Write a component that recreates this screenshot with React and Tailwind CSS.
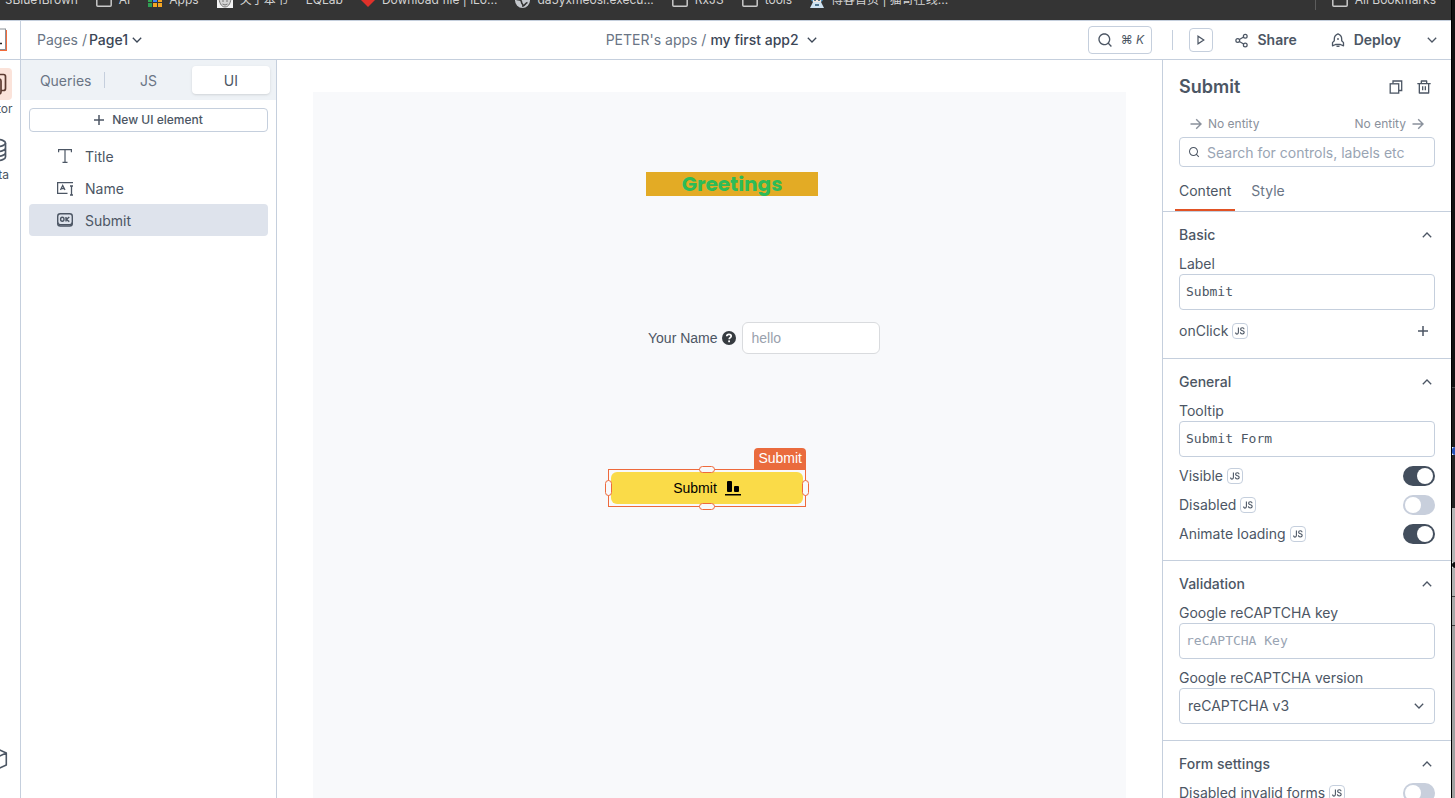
import React, { useState } from "react";
import { Share2 } from "lucide-react";
import { RiDeleteBinLine, RiSearchLine } from "react-icons/ri";

function Chevron({ up = false }) {
  return (
    <svg width="10" height="6" viewBox="0 0 10 6" fill="none" stroke="currentColor" strokeWidth="1.3" className="shrink-0" aria-hidden="true">
      <path d={up ? "M.8 5.2 5 1l4.2 4.2" : "M.8.8 5 5 9.2.8"} />
    </svg>
  );
}

function Plus({ size = 10 }) {
  return (
    <svg width={size} height={size} viewBox="0 0 10 10" stroke="currentColor" strokeWidth="1.5" aria-hidden="true">
      <path d="M5 0v10M0 5h10" />
    </svg>
  );
}

function Arrow() {
  return (
    <svg width="12" height="12" viewBox="0 0 12 12" fill="none" stroke="currentColor" strokeWidth="1.4" aria-hidden="true">
      <path d="M.5 6h10.500M6.200 1.200 11 6l-4.800 4.800" />
    </svg>
  );
}

function FolderIcon() {
  return (
    <svg width="16" height="16" viewBox="0 0 16 16" fill="none" stroke="#c9c9c9" strokeWidth="1.5" className="shrink-0" aria-hidden="true">
      <path d="M.8 3a1 1 0 0 1 1-1h4l1.600 2h6.800a1 1 0 0 1 1 1v8.200a1 1 0 0 1-1 1H1.800a1 1 0 0 1-1-1z" />
    </svg>
  );
}

function AppsIcon() {
  const colors = ["#ea4335", "#ea4335", "#ea4335", "#34a853", "#4285f4", "#f5a623", "#2f9e53", "#f5a623", "#f5a623"];
  return (
    <svg width="14" height="14" viewBox="0 0 14 14" className="shrink-0" aria-hidden="true">
      {colors.map((c, i) => (
        <rect key={i} x={(i % 3) * 5} y={Math.floor(i / 3) * 5} width="4" height="4" fill={c} />
      ))}
    </svg>
  );
}

function FaceIcon() {
  return (
    <svg width="16" height="16" viewBox="0 0 16 16" className="shrink-0" aria-hidden="true">
      <rect width="16" height="16" fill="#f2f2f2" />
      <path d="M2 5c0 5 2 10 6 10s6-5 6-10" fill="#d4d4d4" stroke="#777" />
      <path d="M5 9h2M9 9h2M5.500 12q2.500 2 5 0" stroke="#777" fill="none" />
    </svg>
  );
}

function DiamondIcon() {
  return (
    <svg width="14" height="14" viewBox="0 0 14 14" className="shrink-0" aria-hidden="true">
      <path d="M7 0l7 7-7 7-7-7z" fill="#e0312a" />
    </svg>
  );
}

function GlobeIcon() {
  return (
    <svg width="15" height="15" viewBox="0 0 15 15" className="shrink-0" aria-hidden="true">
      <circle cx="7.500" cy="7.500" r="7.500" fill="#c4c7cc" />
      <path d="M1.500 6.500c3 0 5 .5 5 2.500s1.500 1.500 1.500 4c2.500-1 2-3 4.500-3.500" fill="none" stroke="#343434" strokeWidth="1.600" />
    </svg>
  );
}

function RobotIcon() {
  return (
    <svg width="14" height="16" viewBox="0 0 14 16" className="shrink-0" aria-hidden="true">
      <rect x="1" width="12" height="10" rx="3" fill="#5aa0cf" />
      <rect x="3" y="5" width="8" height="5" fill="#f3e6dc" />
      <path d="M0 16l3-6h8l3 6z" fill="#cfe3f2" />
      <path d="M4 8h2M8 8h2M5 13h4" stroke="#24506e" strokeWidth="1.300" />
    </svg>
  );
}

const bookmarks = [
  { text: "3Blue1Brown" },
  { text: "AI", icon: <FolderIcon /> },
  { text: "Apps", icon: <AppsIcon /> },
  { text: "关于本书", icon: <FaceIcon /> },
  { text: "EQLab" },
  { text: "Download file | iLo...", icon: <DiamondIcon /> },
  { text: "da5yxmeosi.execu...", icon: <GlobeIcon /> },
  { text: "RxJS", icon: <FolderIcon /> },
  { text: "tools", icon: <FolderIcon /> },
  { text: "博客首页 | 猫哥在线...", icon: <RobotIcon /> },
];

function BookmarkLink({ text, icon }) {
  return (
    <a href="#bookmark" className="flex shrink-0 items-center gap-[7px] whitespace-nowrap">
      {icon}
      {text}
    </a>
  );
}

function BookmarkBar() {
  return (
    <nav aria-label="Bookmarks" className="h-5 shrink-0 overflow-hidden bg-[#343434] text-xs text-[#d2d2d2]">
      <div className="-mt-2.5 flex h-5 items-center gap-[18px] pl-[5px] pr-[15px]">
        {bookmarks.map((b) => (
          <BookmarkLink key={b.text} {...b} />
        ))}
        <div className="ml-auto flex items-center gap-4">
          <span className="h-5 w-px bg-[#5c5c5c]" />
          <BookmarkLink text="All Bookmarks" icon={<FolderIcon />} />
        </div>
      </div>
    </nav>
  );
}

function Logo() {
  return (
    <svg width="24" height="24" viewBox="0 0 24 24" aria-hidden="true">
      <rect x="2" y="2" width="21" height="21" fill="#f26b3a" />
      <rect x="1" y="1" width="20.500" height="20.500" fill="#fff" stroke="#8a8f96" />
      <path d="M4 15l3-7 3 7M5 13h4M13 15.500h5" stroke="#222" strokeWidth="1.500" fill="none" />
    </svg>
  );
}

function DeployIcon() {
  return (
    <svg width="14" height="14" viewBox="0 0 14 14" fill="none" stroke="currentColor" strokeWidth="1.300" strokeLinejoin="round" aria-hidden="true">
      <path d="M7 .9C4.700 1.900 3.300 3.800 3.300 6v1.700L1.500 9.600v3.200l3-1.300h5l3 1.300V9.600l-1.800-1.900V6C10.700 3.800 9.300 1.900 7 .9z" />
      <path d="M5.500 13.300h3" />
      <circle cx="7" cy="6" r=".9" fill="currentColor" stroke="none" />
    </svg>
  );
}

function Header() {
  return (
    <header className="flex h-10 shrink-0 border-y border-[#c5cfdd] bg-white text-[#4c5664]">
      <div className="flex w-[21px] shrink-0 justify-end overflow-hidden border-r border-[#c5cfdd]">
        <a href="#home" aria-label="Home" className="flex w-12 shrink-0 items-center justify-center">
          <Logo />
        </a>
      </div>
      <div className="grid flex-1 grid-cols-[11fr_auto_12fr] items-center pl-4 pr-[14px] text-sm">
        <div className="flex items-center gap-0.5">
          <span className="text-[#6a7585]">Pages /</span>
          <button className="flex items-center gap-1 font-medium text-[#3b4656]">
            Page1 <Chevron />
          </button>
        </div>
        <div className="flex items-center gap-1">
          <span className="text-[#6a7585]">PETER's apps /</span>
          <button className="flex items-center gap-2 font-medium text-[#3b4656]">
            my first app2 <Chevron />
          </button>
        </div>
        <div className="flex items-center justify-end">
          <button aria-label="Search" className="flex h-7 w-16 items-center justify-center gap-2 rounded border border-[#c5cfdd] text-xs">
            <RiSearchLine size={16} />
            <span>
              ⌘ <i>K</i>
            </span>
          </button>
          <span className="ml-5 h-5 w-px bg-[#c5cfdd]" />
          <button aria-label="Preview" className="ml-4 flex size-6 items-center justify-center rounded border border-[#c5cfdd]">
            <svg width="8" height="10" viewBox="0 0 8 10" fill="none" stroke="currentColor" strokeWidth="1.200" aria-hidden="true">
              <path d="M1 1.200v7.600L6.800 5z" />
            </svg>
          </button>
          <button className="ml-[21px] flex items-center gap-2 font-semibold">
            <Share2 size={15} strokeWidth={2} />
            Share
          </button>
          <button className="ml-[34px] flex items-center gap-[9px] font-semibold">
            <DeployIcon />
            Deploy
          </button>
          <button aria-label="Deploy options" className="ml-[26px]">
            <Chevron />
          </button>
        </div>
      </div>
    </header>
  );
}

function Rail() {
  return (
    <nav aria-label="Workspace" className="flex w-[21px] shrink-0 justify-end overflow-hidden border-r border-[#c5cfdd] text-xs text-[#4c5664]">
      <div className="flex w-12 shrink-0 flex-col items-center pb-[27px] pt-2">
        <a href="#editor" className="flex flex-col items-center gap-px">
          <span className="flex size-8 items-center justify-center rounded bg-[#fbe3da] text-[#5c3a30]">
            <svg width="24" height="24" viewBox="0 0 24 24" fill="none" stroke="currentColor" strokeWidth="1.700" aria-hidden="true">
              <rect x="3" y="7" width="14" height="15" rx="2" />
              <path d="M7.500 7V4.500a2 2 0 0 1 2-2h10a2 2 0 0 1 2 2v12a2 2 0 0 1-2 2H17" />
            </svg>
          </span>
          <span>Editor</span>
        </a>
        <a href="#data" className="mt-[17px] flex flex-col items-center gap-px">
          <span className="flex size-8 items-center justify-center">
            <svg width="24" height="24" viewBox="0 0 24 24" fill="none" stroke="currentColor" strokeWidth="1.700" aria-hidden="true">
              <ellipse cx="12" cy="5" rx="9.500" ry="3.700" />
              <path d="M2.500 5v14c0 2 4.300 3.700 9.500 3.700s9.500-1.700 9.500-3.700V5M2.500 10c0 2 4.300 3.700 9.500 3.700s9.500-1.700 9.500-3.700M2.500 14.800c0 2 4.300 3.700 9.500 3.700s9.500-1.700 9.500-3.700" />
            </svg>
          </span>
          <span>Data</span>
        </a>
        <a href="#libraries" aria-label="Libraries" className="mt-auto">
          <svg width="24" height="24" viewBox="0 0 24 24" fill="none" stroke="currentColor" strokeWidth="1.600" strokeLinejoin="round" aria-hidden="true">
            <path d="M12 1.500 22.300 6v12L12 22.500 1.700 18V6zM1.700 6 12 10.500 22.300 6M12 10.500v12" />
          </svg>
        </a>
      </div>
    </nav>
  );
}

function TextIcon() {
  return (
    <svg width="16" height="16" viewBox="0 0 16 16" fill="none" stroke="currentColor" strokeWidth="1.200" aria-hidden="true">
      <path d="M1.600 4.200V1.600h12.800v2.600M8 1.600v12.800M5.500 14.400h5" />
    </svg>
  );
}

function InputIcon() {
  return (
    <svg width="16" height="16" viewBox="0 0 16 16" fill="none" stroke="currentColor" strokeWidth="1.300" aria-hidden="true">
      <path d="M16 2.600H.6v10.800H10.500" />
      <path d="M3.500 10 5.700 5.500 8 10M4.300 8.700h2.900" />
      <path d="M14.500 6v9M13 6h3M13 15h3" />
    </svg>
  );
}

function ButtonIcon() {
  return (
    <svg width="16" height="16" viewBox="0 0 16 16" fill="none" stroke="currentColor" strokeWidth="1.400" aria-hidden="true">
      <rect x=".7" y="1.800" width="14.600" height="10.800" rx="2.600" />
      <path d="M.7 10.500v1c0 1.600 1.200 2.500 2.600 2.500h9.400c1.400 0 2.600-.9 2.600-2.500v-1" />
      <ellipse cx="5.300" cy="7.300" rx="1.700" ry="2" />
      <path d="M9 5v4.600M12.300 5 9.400 7.500l2.900 2.100" />
    </svg>
  );
}

const widgets = [
  { name: "Title", icon: <TextIcon /> },
  { name: "Name", icon: <InputIcon /> },
  { name: "Submit", icon: <ButtonIcon /> },
];

function Explorer() {
  return (
    <aside className="w-64 shrink-0 border-r border-[#c5cfdd] text-sm text-[#4c5664]">
      <div role="tablist" className="grid h-10 grid-cols-3 items-center gap-1 bg-[#eef2f6] px-1.5 text-[#6a7585]">
        <button role="tab" aria-selected="false" className="flex h-7 items-center justify-center">
          <span className="flex-1 pt-0.5">Queries</span>
          <span className="h-4 w-px bg-[#c5cfdd]" />
        </button>
        <button role="tab" aria-selected="false" className="h-7 pt-0.5">JS</button>
        <button role="tab" aria-selected="true" className="h-7 rounded bg-white pt-0.5 text-[#4c5664] shadow-sm">UI</button>
      </div>
      <div className="p-2">
        <button className="flex h-6 w-full items-center justify-center gap-2 rounded border border-[#c5cfdd] text-xs font-medium">
          <Plus />
          New UI element
        </button>
        <ul className="mt-2">
          {widgets.map((w) => (
            <li key={w.name}>
              <button
                className={
                  w.name === "Submit"
                    ? "flex h-8 w-full items-center gap-3 rounded bg-[#dee3ec] pl-7"
                    : "flex h-8 w-full items-center gap-3 rounded pl-7"
                }
              >
                {w.icon}
                <span className="pt-0.5">{w.name}</span>
              </button>
            </li>
          ))}
        </ul>
      </div>
    </aside>
  );
}

function Canvas() {
  return (
    <main className="min-w-0 flex-1 px-9 pt-8">
      <div className="relative h-full bg-[#f8f9fb] font-['Liberation_Sans',Arial,sans-serif] text-sm">
        <h1 className="absolute left-[333px] top-20 h-6 w-[172px] bg-[#e3ab25] text-center font-[Poppins,Inter,sans-serif] text-xl leading-6 font-bold text-[#2dbb58]">
          Greetings
        </h1>

        <div className="absolute left-[335px] top-[230px] flex items-center">
          <label htmlFor="your-name" className="text-[#4c5664]">Your Name</label>
          <svg width="14" height="14" viewBox="0 0 14 14" className="ml-1 mr-1.5" aria-hidden="true">
            <circle cx="7" cy="7" r="7" fill="#363b40" />
            <path d="M4.800 5.300c0-1.300 1-2 2.200-2s2.200.7 2.200 1.900c0 1.500-2 1.500-2 3.100" fill="none" stroke="#fff" strokeWidth="1.700" />
            <rect x="6.200" y="9.400" width="1.800" height="1.800" fill="#fff" />
          </svg>
          <input
            id="your-name"
            placeholder="hello"
            className="h-8 w-[138px] rounded-md border border-[#d9dbde] bg-white px-[9px] text-[#4c5664] outline-none placeholder:text-[#99a1ad]"
          />
        </div>

        <div className="absolute left-[295px] top-[377px] h-[38px] w-[198px] border border-[#ee6a3c] p-0.5">
          <button className="flex h-full w-full items-center justify-center gap-2 rounded-md bg-[#fadb48] text-black">
            Submit
            <svg width="16" height="16" viewBox="0 0 16 16" aria-hidden="true">
              <rect x="2" y="1" width="5" height="11" rx="1" />
              <rect x="9" y="6" width="5" height="6" rx="1" />
              <rect x="0" y="14" width="16" height="1.500" />
            </svg>
          </button>
          <span className="absolute -right-px bottom-full flex h-[22px] items-center rounded-t-sm bg-[#ea6b3d] px-1 pb-0.5 text-white">Submit</span>
          <span className="absolute left-1/2 -top-1 h-[7px] w-4 -translate-x-1/2 rounded-full border border-[#ee6a3c] bg-[#f8f9fb]" />
          <span className="absolute left-1/2 -bottom-1 h-[7px] w-4 -translate-x-1/2 rounded-full border border-[#ee6a3c] bg-[#f8f9fb]" />
          <span className="absolute top-1/2 -left-1 h-4 w-[7px] -translate-y-1/2 rounded-full border border-[#ee6a3c] bg-[#f8f9fb]" />
          <span className="absolute top-1/2 -right-1 h-4 w-[7px] -translate-y-1/2 rounded-full border border-[#ee6a3c] bg-[#f8f9fb]" />
        </div>
      </div>
    </main>
  );
}

function JsBadge() {
  return (
    <button aria-label="Toggle JS" className="flex size-4 items-center justify-center rounded border border-[#c5cfdd]">
      <svg width="10" height="8" viewBox="0 0 10 8" fill="none" stroke="currentColor" strokeWidth="1.100" aria-hidden="true">
        <path d="M3.400.5v4.800c0 1.200-.5 1.800-1.400 1.800S.6 6.500.6 5.500M9 2.300C9 1.200 8.300.7 7.300.7S5.600 1.200 5.600 2.200c0 2.200 3.600 1 3.600 3.100 0 1.100-.8 1.700-1.900 1.700S5.400 6.400 5.400 5.300" />
      </svg>
    </button>
  );
}

function Section({ title, children }) {
  return (
    <section className="flex flex-col gap-[9px] border-b border-[#c5cfdd] px-4 pb-4 pt-3">
      <button aria-expanded="true" className="flex h-[21px] items-center justify-between pr-[3px] font-medium">
        {title}
        <Chevron up />
      </button>
      {children}
    </section>
  );
}

function TextField({ id, label, value, placeholder }) {
  return (
    <div>
      <label htmlFor={id} className="block h-5 leading-5">{label}</label>
      <input
        id={id}
        defaultValue={value}
        placeholder={placeholder}
        className="block h-9 w-full rounded border border-[#c5cfdd] px-1.5 pb-0.5 font-['DejaVu_Sans_Mono',monospace] text-[13px] outline-none placeholder:text-[#99a4b3]"
      />
    </div>
  );
}

function Toggle({ id, label, initial = false }) {
  const [on, setOn] = useState(initial);
  return (
    <div className="flex h-5 items-center gap-1">
      <label htmlFor={id}>{label}</label>
      <JsBadge />
      <input
        id={id}
        type="checkbox"
        role="switch"
        checked={on}
        onChange={() => setOn(!on)}
        className="ml-auto h-5 w-8 appearance-none rounded-full bg-[#c8cfdc] before:ml-0.5 before:mt-0.5 before:block before:size-4 before:rounded-full before:bg-white checked:bg-[#434e5d] checked:before:ml-3.5"
      />
    </div>
  );
}

function PropertyPane() {
  return (
    <aside className="w-[289px] shrink-0 overflow-hidden border-l border-[#c5cfdd] text-sm text-[#4c5664]">
      <div className="px-4 pt-3">
        <div className="flex h-[30px] items-center">
          <h2 className="flex-1 text-lg font-semibold">Submit</h2>
          <button aria-label="Copy" className="mr-3 p-px">
            <svg width="14" height="14" viewBox="0 0 14 14" fill="none" stroke="currentColor" strokeWidth="1.300" aria-hidden="true">
              <rect x="1.200" y="3.800" width="8.500" height="9.300" />
              <path d="M4 3.500V1h8.700v9.500H10" />
            </svg>
          </button>
          <button aria-label="Delete" className="mr-[3px]">
            <RiDeleteBinLine size={16} />
          </button>
        </div>
        <div className="mt-2.5 flex h-6 items-center justify-between px-[11px] text-xs text-[#8a919c]">
          <span className="flex items-center gap-1.5"><Arrow />No entity</span>
          <span className="flex items-center gap-1.5">No entity<Arrow /></span>
        </div>
        <div className="mt-px flex h-[30px] items-center gap-[7px] rounded border border-[#c5cfdd] px-2">
          <RiSearchLine size={12} className="shrink-0" />
          <input
            aria-label="Search for controls, labels etc"
            placeholder="Search for controls, labels etc"
            className="min-w-0 flex-1 pt-0.5 outline-none placeholder:text-[#99a4b3]"
          />
        </div>
      </div>
      <div role="tablist" className="flex h-[45px] items-stretch gap-3 border-b border-[#c5cfdd] px-3 text-[#6a7585]">
        <button role="tab" aria-selected="true" className="border-b-2 border-[#e15224] px-1 pt-1.5 text-[#4c5664]">Content</button>
        <button role="tab" aria-selected="false" className="border-b-2 border-transparent px-1 pt-1.5">Style</button>
      </div>

      <Section title="Basic">
        <TextField id="label" label="Label" value="Submit" />
        <div className="flex h-[23px] items-center gap-1">
          <span>onClick</span>
          <JsBadge />
          <button aria-label="Add action" className="ml-auto mr-[7px]"><Plus /></button>
        </div>
      </Section>

      <Section title="General">
        <TextField id="tooltip" label="Tooltip" value="Submit Form" />
        <Toggle id="visible" label="Visible" initial />
        <Toggle id="disabled" label="Disabled" />
        <Toggle id="animate" label="Animate loading" initial />
      </Section>

      <Section title="Validation">
        <TextField id="captcha-key" label="Google reCAPTCHA key" placeholder="reCAPTCHA Key" />
        <div>
          <label htmlFor="captcha-version" className="block h-5 leading-5">Google reCAPTCHA version</label>
          <div className="relative">
            <select id="captcha-version" className="block h-9 w-full appearance-none rounded border border-[#c5cfdd] bg-white px-2 outline-none">
              <option>reCAPTCHA v3</option>
              <option>reCAPTCHA v2</option>
            </select>
            <span className="pointer-events-none absolute inset-y-0 right-[11px] flex items-center"><Chevron /></span>
          </div>
        </div>
      </Section>

      <Section title="Form settings">
        <Toggle id="invalid-forms" label="Disabled invalid forms" />
      </Section>
    </aside>
  );
}

function WindowEdge() {
  return (
    <div aria-hidden="true" className="flex w-1 shrink-0 flex-col border-l border-black">
      <div className="flex-[388] bg-[#111111]" />
      <div className="flex-[60] border-t border-[#4a4a4a] bg-[#1c1c1c]" />
      <div className="h-2 rounded-l-full bg-[#2450b8]" />
      <div className="flex-[53] bg-[#242424]" />
      <div className="flex-[54] bg-[#b5b5b5]" />
      <div className="h-1.5 rounded-l-full bg-[#111111]" />
      <div className="flex-[28] border-b border-[#444444] bg-[#b0b0b0]" />
      <div className="flex-[28] border-b border-[#444444] bg-[#a8a8a8]" />
      <div className="flex-[173] bg-[#a0a0a0]" />
    </div>
  );
}

export default function App() {
  return (
    <div className="flex h-screen overflow-hidden bg-white font-[Inter,'Noto_Sans_CJK_SC',sans-serif]">
      <div className="flex min-w-0 flex-1 flex-col">
        <BookmarkBar />
        <Header />
        <div className="flex min-h-0 flex-1">
          <Rail />
          <Explorer />
          <Canvas />
          <PropertyPane />
        </div>
      </div>
      <WindowEdge />
    </div>
  );
}
